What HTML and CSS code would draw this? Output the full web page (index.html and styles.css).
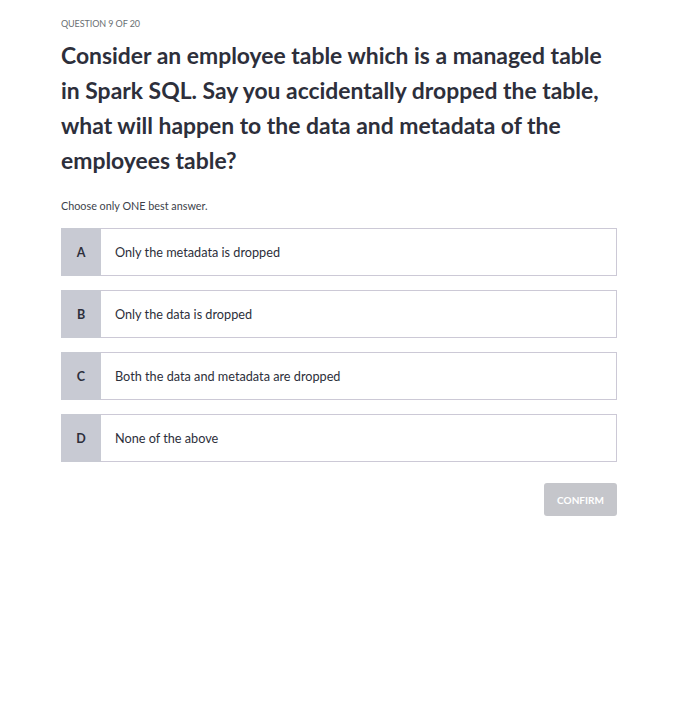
FILE: index.html
```html
<!DOCTYPE html>
<html>
<head>
<meta charset="utf-8">
<link rel="stylesheet" href="styles.css">
</head>
<body>
<main class="quiz">
  <div class="counter">QUESTION 9 OF 20</div>
  <h1 class="question">Consider an employee table which is a managed table in Spark SQL. Say you accidentally dropped the table, what will happen to the data and metadata of the employees table?</h1>
  <p class="hint">Choose only ONE best answer.</p>
  <ul class="options">
    <li class="option"><span class="letter">A</span><span class="text">Only the metadata is dropped</span></li>
    <li class="option"><span class="letter">B</span><span class="text">Only the data is dropped</span></li>
    <li class="option"><span class="letter">C</span><span class="text">Both the data and metadata are dropped</span></li>
    <li class="option"><span class="letter">D</span><span class="text">None of the above</span></li>
  </ul>
  <div class="actions"><button class="confirm" disabled>CONFIRM</button></div>
</main>
</body>
</html>
```
FILE: styles.css
```css
html, body { margin: 0; padding: 0; background: #fff; }
body { font-family: Lato, "Open Sans", sans-serif; color: #2d2f3b; }
.quiz { width: 556px; margin-left: 61px; padding-top: 18px; }
.counter { font-size: 9px; color: #6a6f73; line-height: 12px; letter-spacing: -0.1px; }
.question { font-size: 22.9px; font-weight: 700; line-height: 35px; margin: 8px 0 0; color: #2d2f3b; }
.hint { font-size: 10.8px; color: #3c3f4a; margin: 21px 0 0; line-height: 14px; }
.options { list-style: none; margin: 15px 0 0; padding: 0; display: flex; flex-direction: column; gap: 14px; }
.option { display: flex; height: 48px; border: 1px solid #ccc9d6; box-sizing: border-box; background: #fff; }
.letter { width: 40px; background: #c8cad3; display: flex; align-items: center; justify-content: center; font-size: 12.5px; font-weight: 700; color: #2d2f3b; margin: -1px 0 -1px -1px; }
.text { display: flex; align-items: center; padding-left: 14px; font-size: 12.7px; color: #2d2f3b; }
.actions { display: flex; justify-content: flex-end; margin-top: 21px; }
.confirm { width: 73px; height: 33px; border: none; border-radius: 3px; background: #c5c6cb; color: #fff; font-family: inherit; font-size: 10px; font-weight: 700; padding: 0; }
```
